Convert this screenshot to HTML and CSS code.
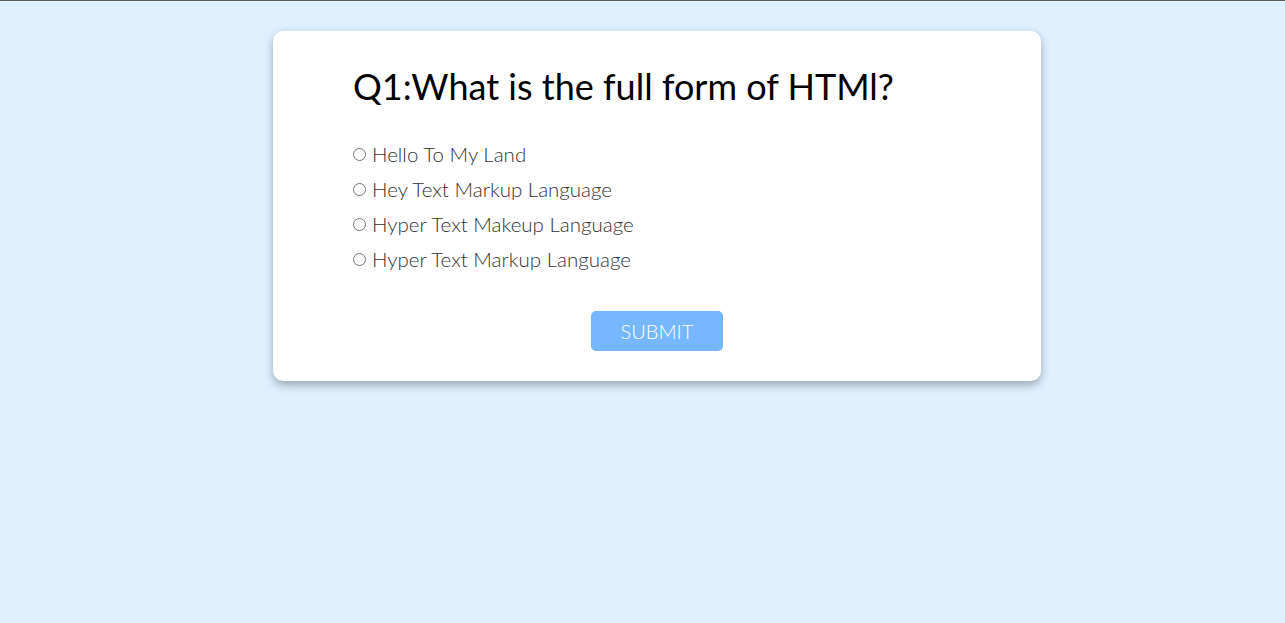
FILE: index.html
```html
<!DOCTYPE html>
<html lang="en">
<head>
<meta charset="utf-8">
<title>Quiz</title>
<link rel="stylesheet" href="styles.css">
</head>
<body>
<div class="page">
  <div class="card">
    <h2 class="question">Q1:What is the full form of HTMl?</h2>
    <ul class="options">
      <li class="option"><input type="radio" name="a" id="a1"><label for="a1">Hello To My Land</label></li>
      <li class="option"><input type="radio" name="a" id="a2"><label for="a2">Hey Text Markup Language</label></li>
      <li class="option"><input type="radio" name="a" id="a3"><label for="a3">Hyper Text Makeup Language</label></li>
      <li class="option"><input type="radio" name="a" id="a4"><label for="a4">Hyper Text Markup Language</label></li>
    </ul>
    <div class="actions"><button class="submit">SUBMIT</button></div>
  </div>
</div>
</body>
</html>
```

FILE: styles.css
```css
html, body {
  margin: 0;
  padding: 0;
}
body {
  background: #e0f0fe;
  border-top: 1px solid #5a5a5a;
  min-height: 622px;
  box-sizing: border-box;
  font-family: "Lato", "Open Sans", sans-serif;
}
.page {
  display: flex;
  justify-content: center;
  padding-left: 29px;
  padding-top: 30px;
}
.card {
  width: 768px;
  height: 350px;
  box-sizing: border-box;
  background: #fff;
  border-radius: 10px;
  box-shadow: 0 4px 10px rgba(0, 0, 0, 0.3);
  padding: 35px 80px 0 80px;
}
.question {
  margin: 0;
  font-weight: 400;
  font-size: 36px;
  line-height: 40px;
  color: #000;
}
.options {
  list-style: none;
  margin: 30px 0 0 0;
  padding: 0;
}
.option {
  display: flex;
  align-items: center;
  height: 35px;
  font-size: 20.5px;
  color: #333;
  font-weight: 300;
}
.option input {
  margin: 2px 6px 0 0;
  width: 13px;
  height: 13px;
}
.actions {
  display: flex;
  justify-content: center;
  margin-top: 35px;
}
.submit {
  width: 132px;
  height: 40px;
  border: none;
  border-radius: 5px;
  background: #76b8ff;
  color: #ffffff;
  font-family: inherit;
  font-size: 20px;
  font-weight: 300;
}
```
